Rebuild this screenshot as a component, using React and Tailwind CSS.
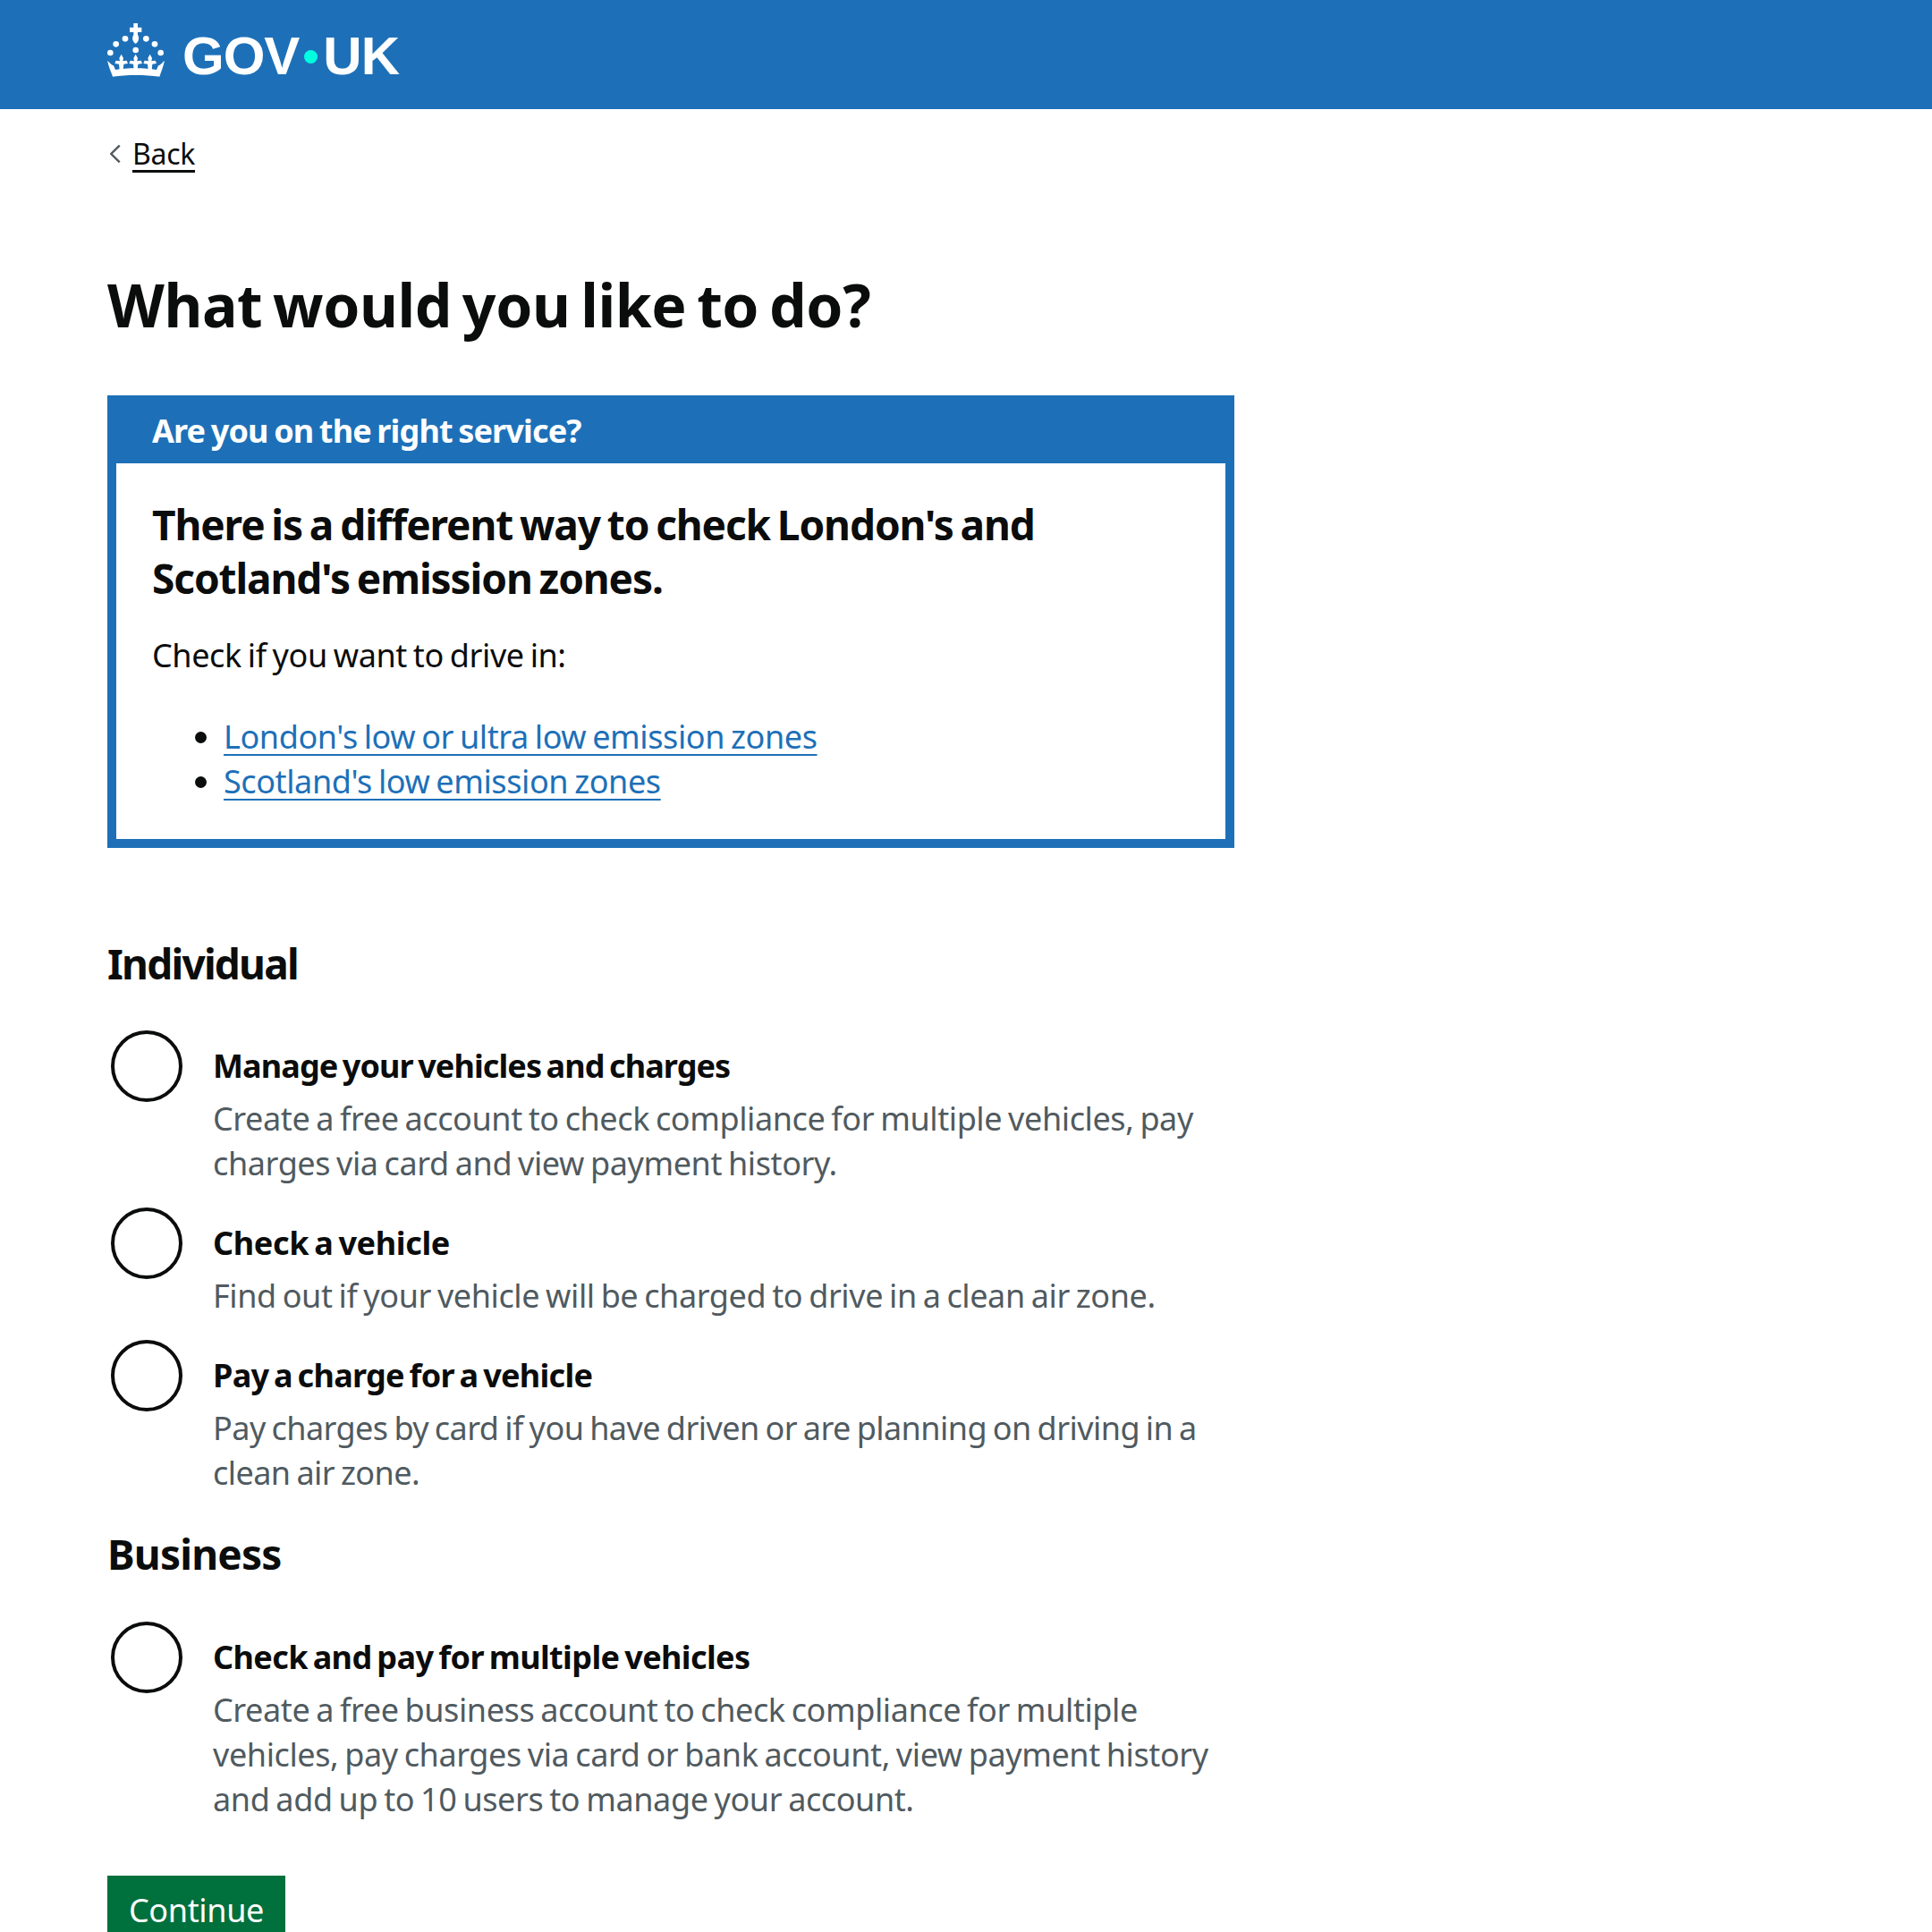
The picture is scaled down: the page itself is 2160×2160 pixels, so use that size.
const sans = "font-['Noto_Sans',sans-serif]";
const bodyText = "text-[36px] leading-[50px] tracking-[-0.4px] [word-spacing:-2px]";
const fleur = "M0 122L7 135L5 145L18 143L22 153L8 155L6 174H-6L-8 155L-22 153L-18 143L-5 145L-7 135Z";

function Crown() {
  return (
    <svg viewBox="15 18 192 180" className="w-[64px] h-[60px] shrink-0" fill="#fff">
      <path d="M103 18h14v14h13v16h-13v8c5 10 6 20 -7 31c-13 -11 -12 -21 -7 -31v-8h-13v-16h13z" />
      <circle cx="75" cy="70" r="10" /><circle cx="145" cy="70" r="10" />
      <circle cx="44" cy="88" r="10" /><circle cx="174" cy="88" r="10" />
      <circle cx="25" cy="117" r="10" /><circle cx="194" cy="117" r="10" />
      <circle cx="110" cy="108" r="10" />
      <path transform="translate(62 0)" d={fleur} />
      <path transform="translate(110 0)" d={fleur} />
      <path transform="translate(158 0)" d={fleur} />
      <path d="M15 143C20 165 28 182 33 197C80 190 140 190 190 197C195 182 202 165 207 143C198 152 192 158 186 160L180 174C140 167 80 167 42 174L36 160C30 158 24 152 15 143Z" />
    </svg>
  );
}

function Radio({ title, desc, className = "", descClass = "", titleClass = "tracking-[-0.7px]" }) {
  return (
    <div className={`flex ${className}`}>
      <div className="w-[80px] h-[80px] ml-[4px] shrink-0 rounded-full border-[4px] border-[#0b0c0c] bg-white" />
      <div className="ml-[34px] pt-[15px]">
        <div className={`text-[36px] leading-[50px] font-bold text-[#0b0c0c] [word-spacing:-3px] ${titleClass}`}>{title}</div>
        <div className={`${bodyText} text-[#505a5f] w-[1130px] mt-[9px] ${descClass}`}>{desc}</div>
      </div>
    </div>
  );
}

export default function App() {
  return (
    <div className={`${sans} w-[2160px] h-[2160px] overflow-hidden bg-white text-[#0b0c0c]`}>
      <header className="h-[122px] bg-[#1d70b8] pl-[120px] pt-[26px] flex items-start">
        <Crown />
        <div className="ml-[20px] mt-[2px] flex items-center font-['Liberation_Sans',sans-serif] font-bold text-[60px] leading-[70px] tracking-[-1px] text-white">
          <span>GOV</span>
          <span className="w-[15px] h-[15px] rounded-full bg-[#00ffe0] mx-[6px]" />
          <span>UK</span>
        </div>
      </header>
      <main className="pl-[120px]">
        <a className="mt-[28px] flex items-center text-[32px] leading-[44px] h-[44px]">
          <svg viewBox="0 0 14 24" className="ml-[3px] w-[12px] h-[22px] shrink-0" fill="none" stroke="#505a5f" strokeWidth="2.8"><path d="M12.5 1 1.5 12l11 11" /></svg>
          <span className="ml-[13px] tracking-[-0.3px] underline decoration-[3px] underline-offset-[6px]">Back</span>
        </a>
        <h1 className="mt-[106px] text-[66px] leading-[80px] font-bold tracking-[-0.4px] [word-spacing:-5px]">What would you like to do?</h1>
        <section className="mt-[62px] w-[1260px] h-[506px] border-[10px] border-[#1d70b8]">
          <div className="bg-[#1d70b8] h-[76px] -mt-[10px] pl-[40px] flex items-center pt-[3px] text-[36px] font-bold text-white tracking-[-0.85px] [word-spacing:-2px]">Are you on the right service?</div>
          <div className="pl-[40px] pt-[38px]">
            <h2 className="text-[46px] leading-[60px] font-bold w-[1150px] tracking-[-1.1px] [word-spacing:-3px]">There is a different way to check London's and Scotland's emission zones.</h2>
            <p className={`mt-[32px] ${bodyText}`}>Check if you want to drive in:</p>
            <ul className={`mt-[41px] pl-[80px] list-disc ${bodyText}`}>
              <li><a className="text-[#1d70b8] underline decoration-[2px] underline-offset-[6px]">London's low or ultra low emission zones</a></li>
              <li><a className="text-[#1d70b8] underline decoration-[2px] underline-offset-[6px]">Scotland's low emission zones</a></li>
            </ul>
          </div>
        </section>
        <h2 className="mt-[99px] text-[46px] leading-[60px] font-bold tracking-[-1.8px]">Individual</h2>
        <Radio className="mt-[45px] h-[198px]" titleClass="tracking-[-0.9px]" title="Manage your vehicles and charges" desc="Create a free account to check compliance for multiple vehicles, pay charges via card and view payment history." />
        <Radio className="h-[148px]" titleClass="tracking-[-0.35px]" title="Check a vehicle" desc="Find out if your vehicle will be charged to drive in a clean air zone." />
        <Radio className="h-[198px]" descClass="tracking-[-0.55px]" title="Pay a charge for a vehicle" desc="Pay charges by card if you have driven or are planning on driving in a clean air zone." />
        <h2 className="mt-[11px] text-[46px] leading-[60px] font-bold tracking-[-0.8px]">Business</h2>
        <Radio className="mt-[46px] h-[248px]" titleClass="tracking-[-0.6px]" title="Check and pay for multiple vehicles" desc="Create a free business account to check compliance for multiple vehicles, pay charges via card or bank account, view payment history and add up to 10 users to manage your account." />
        <button className="mt-[36px] w-[199px] h-[90px] bg-[#00703c] text-white text-[36px] leading-[50px] pb-[12px] tracking-[-0.35px]">Continue</button>
      </main>
    </div>
  );
}
